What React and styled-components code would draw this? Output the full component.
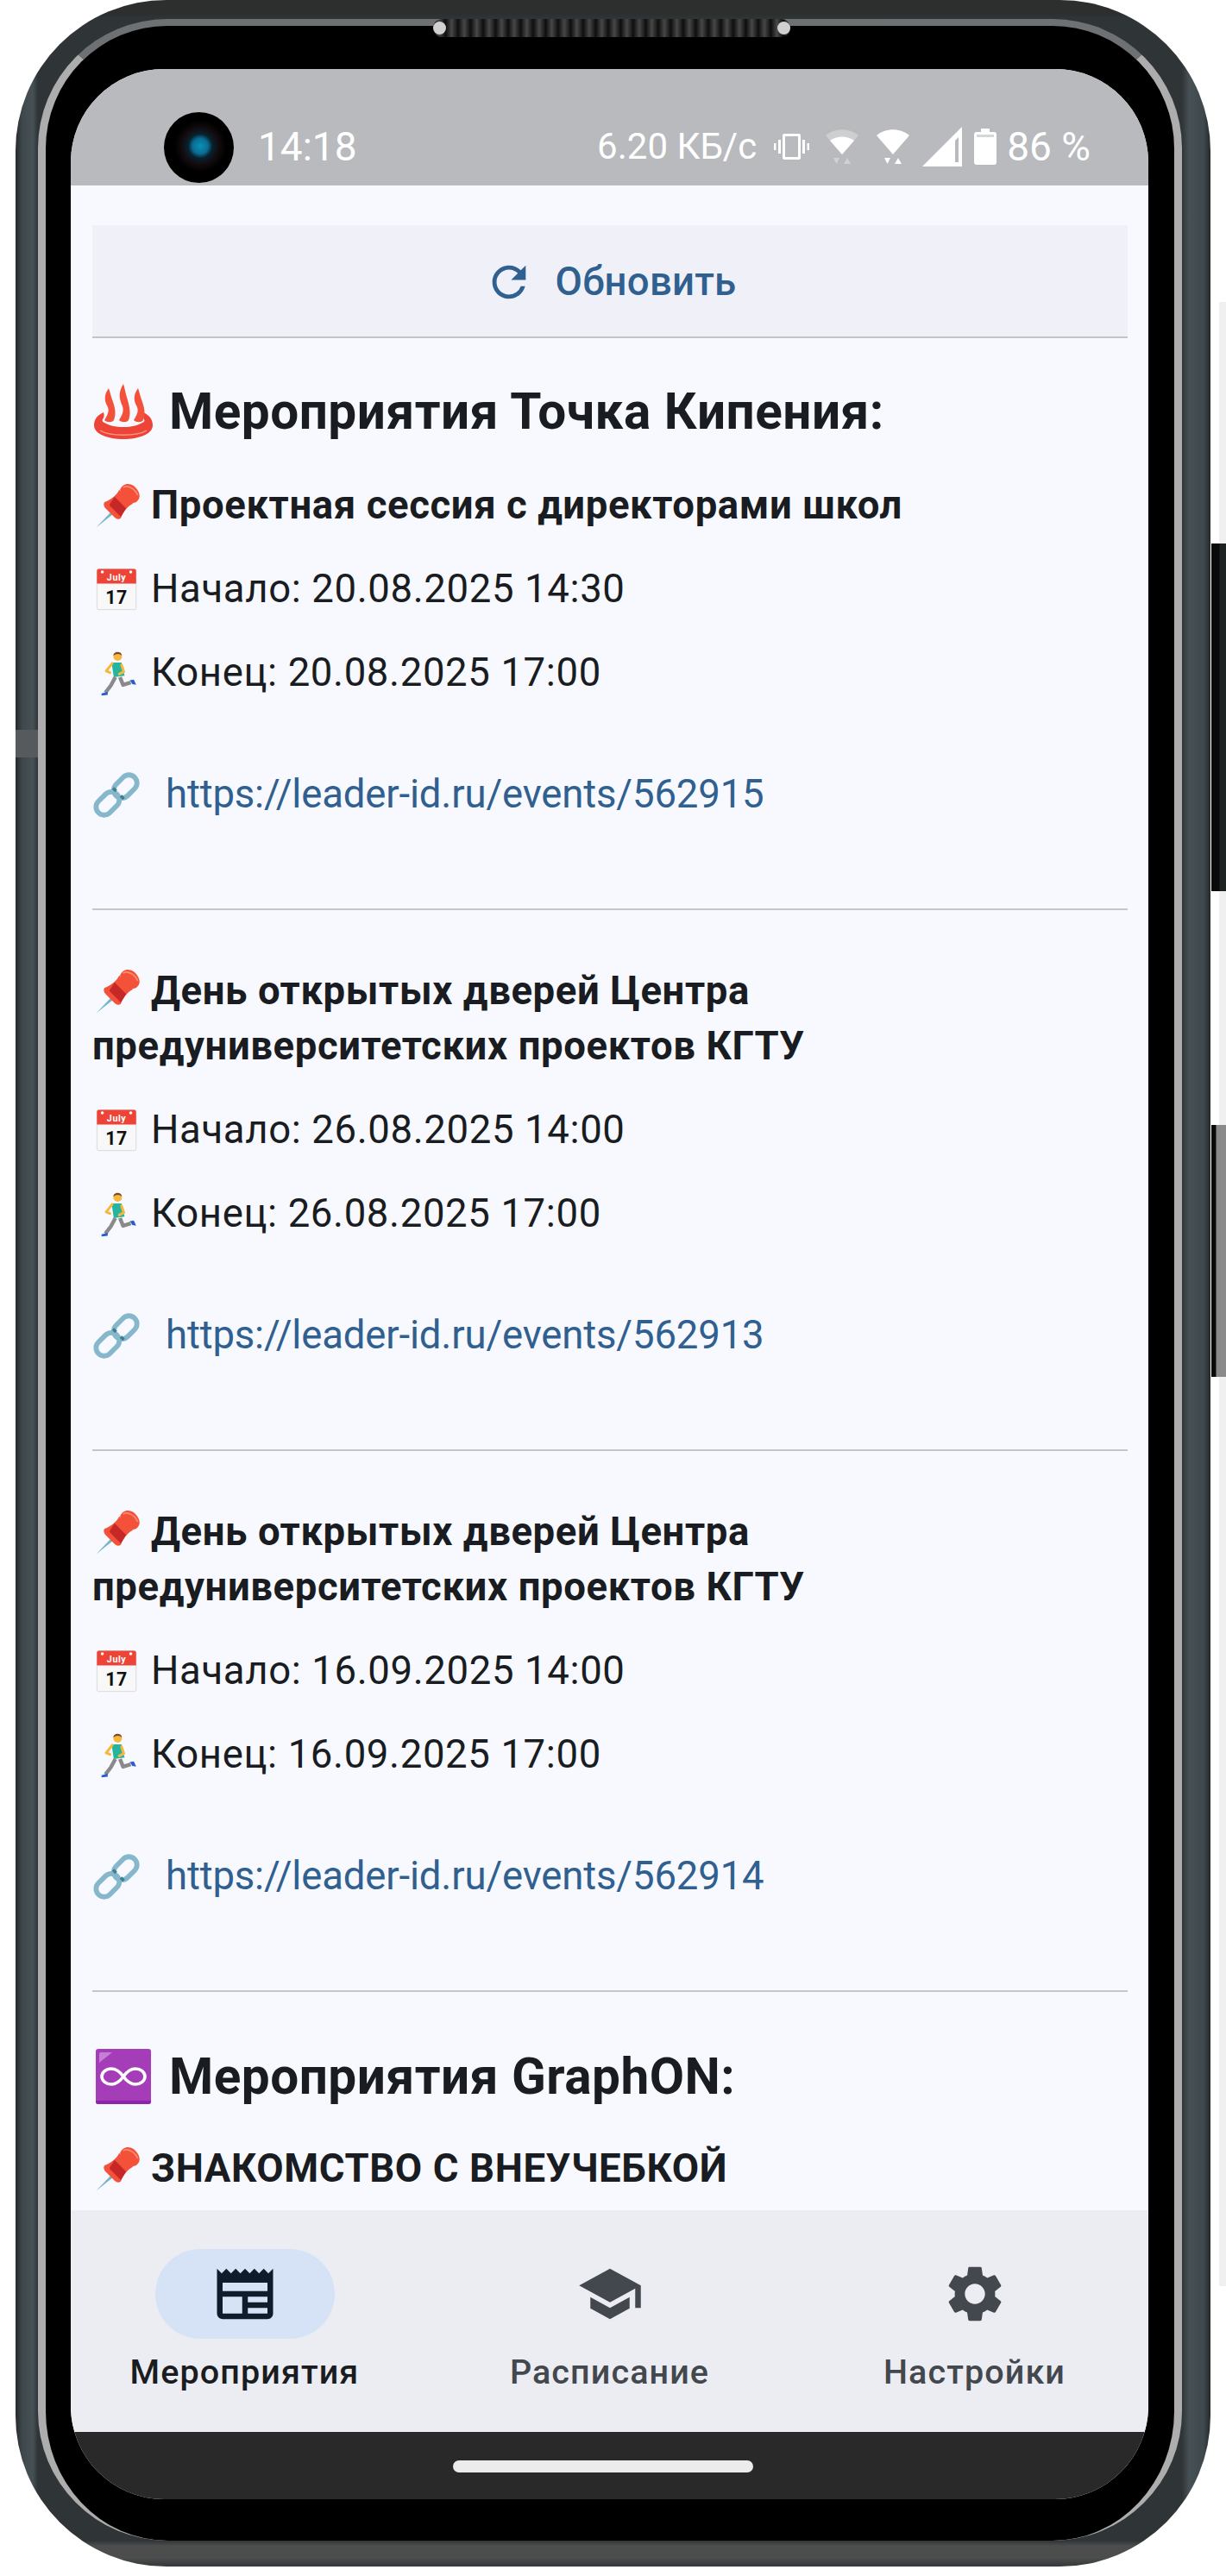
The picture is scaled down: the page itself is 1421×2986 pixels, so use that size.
import React from "react";
import styled, { createGlobalStyle } from "styled-components";
import { MdRefresh, MdNewspaper, MdSchool, MdSettings } from "react-icons/md";

const Global = createGlobalStyle`
  html, body { margin: 0; padding: 0; background: #fff; }
  body { font-family: Roboto, "Noto Sans", sans-serif; }
`;

const Page = styled.div`
  width: 1421px;
  height: 2986px;
  position: relative;
  overflow: hidden;
  background: #fff;
`;

const SideStrip = styled.div`
  position: absolute;
  right: 0;
  top: 350px;
  width: 8px;
  height: 2300px;
  background: #f0f0f0;
`;

const SideKey = styled.div`
  position: absolute;
  right: 0;
  width: 17px;
  top: ${(p) => p.$top}px;
  height: ${(p) => p.$height}px;
  background: linear-gradient(90deg, #0a0a0a 0 ${(p) => p.$edge}px, ${(p) => p.$color} ${(p) => p.$edge + 1}px);
`;

const RimMark = styled.div`
  position: absolute;
  width: 26px;
  left: ${(p) => p.$left}px;
  top: ${(p) => p.$top}px;
  height: ${(p) => p.$height}px;
  background: ${(p) => p.$color};
`;

const Shell = styled.div`
  position: relative;
  width: 1385px;
  height: 2975px;
  margin-left: 18px;
  box-sizing: border-box;
  padding: 22px 33px 30px 26px;
  border-radius: 175px;
  background:
    linear-gradient(180deg, #2d2f2f 0, #2d2f2f 16px, rgba(45, 47, 47, 0) 22px),
    linear-gradient(0deg, #33383a 0, #4c4d4d 10px, #4c4d4d 24px, rgba(76, 77, 77, 0) 30px),
    linear-gradient(90deg, #25292a 0, #3f494d 8px, #465055 20px, #2f3537 26px, #2f3537 1352px, #465055 1360px, #3f494d 1377px, #25292a 1385px);
`;

const Rim = styled.div`
  height: 100%;
  box-sizing: border-box;
  border-style: solid;
  border-color: #6e7173 #adadad transparent #adadad;
  border-width: 8px 9px 0 9px;
  border-radius: 150px;
  background: #000;
  padding: 50px 30px 48px 29px;
`;

const Screen = styled.div`
  height: 100%;
  border-radius: 108px;
  overflow: hidden;
  display: flex;
  flex-direction: column;
  background: #f8f9ff;
`;

const Speaker = styled.div`
  position: absolute;
  left: 484px;
  top: 22px;
  width: 414px;
  height: 21px;
  border-radius: 10px;
  background: repeating-linear-gradient(90deg, #0e0e0e 0, #474747 7px, #0e0e0e 14.5px);
  &::before, &::after {
    content: "";
    position: absolute;
    top: 3px;
    width: 15px;
    height: 15px;
    border-radius: 50%;
    background: #d0d0d0;
  }
  &::before { left: 0; }
  &::after { right: 0; }
`;

const StatusBar = styled.div`
  flex: 0 0 135px;
  position: relative;
  display: flex;
  align-items: center;
  background: #b9babd;
  color: #fff;
  font-size: 42px;
  padding: 44px 67px 0 217px;
  box-sizing: border-box;
`;

const Camera = styled.div`
  position: absolute;
  left: 108px;
  top: 50px;
  width: 81px;
  height: 82px;
  border-radius: 50%;
  background: radial-gradient(circle at 52% 48%, #0c8fb8 0, #0a6c92 9px, #08222e 14px, #120a0d 22px, #000 30px);
`;

const Clock = styled.span`
  flex: 1;
  font-size: 46px;
`;

const StatusRight = styled.div`
  display: flex;
  align-items: center;
`;

const StatusText = styled.span`
  margin-right: ${(p) => p.$mr || 0}px;
  font-size: ${(p) => p.$size || 42}px;
  white-space: nowrap;
`;

const StatusIcon = styled.svg`
  display: block;
  width: ${(p) => p.$w}px;
  height: ${(p) => p.$h}px;
  margin-right: ${(p) => p.$mr || 0}px;
  fill: #fff;
`;

const Content = styled.div`
  flex: 1;
  min-height: 0;
  overflow: hidden;
  box-sizing: border-box;
  padding: 46px 24px 0 25px;
`;

const RefreshButton = styled.div`
  height: 131px;
  box-sizing: border-box;
  display: flex;
  align-items: center;
  justify-content: center;
  padding-top: 2px;
  background: #f0f1f8;
  border-bottom: 2px solid #c3c4c9;
  color: #30608f;
  font-size: 45.5px;
  font-weight: 500;
  letter-spacing: 0.25px;
  svg { width: 58px; height: 58px; margin-right: 25px; }
`;

const Heading = styled.h2`
  margin: ${(p) => p.$mt}px 0 0;
  font-size: 58.5px;
  line-height: 76px;
  font-weight: 700;
  letter-spacing: 0.5px;
  color: #191c20;
  white-space: nowrap;
  display: flex;
  align-items: center;
`;

const Title = styled.p`
  margin: ${(p) => p.$mt}px 0 0;
  font-size: 45.5px;
  line-height: 64px;
  font-weight: 700;
  color: #191c20;
  letter-spacing: 0.6px;
`;

const Line = styled.p`
  margin: ${(p) => p.$mt}px 0 0;
  font-size: 45.5px;
  line-height: 65px;
  color: #191c20;
  letter-spacing: 0.63px;
`;

const LinkRow = styled(Line)`
  margin-top: 76px;
`;

const Url = styled.span`
  color: #30608f;
  margin-left: 17px;
  letter-spacing: -0.15px;
`;

const Rule = styled.hr`
  margin: 100px 0 0;
  border: 0;
  height: 2px;
  background: #c4c6cc;
`;

const EmojiBox = styled.svg`
  width: ${(p) => p.$size || 57}px;
  height: ${(p) => p.$size || 57}px;
  margin-right: ${(p) => p.$mr ?? 11}px;
  vertical-align: -14px;
  flex: none;
`;

const Pin = () => (
  <EmojiBox viewBox="0 0 64 64">
    <path d="M5 60 L26 38 L29 41 Z" fill="#79b4c8" />
    <path d="M16 27 C24 24 32 18 35 11 L53 29 C46 32 40 40 37 48 C34 50 31 49 29 47 L18 36 C15 33 14 29 16 27 Z" fill="#f4513a" />
    <path d="M29 20 L44 35 L37 46 L22 31 Z" fill="#c62828" />
    <path d="M36 11 C39 3 47 1 54 6 C61 12 64 20 59 25 C56 29 50 29 47 25 L38 16 Z" fill="#f4513a" />
    <path d="M40 8 C46 4 56 10 59 18" fill="none" stroke="#ff8a70" strokeWidth="2" />
  </EmojiBox>
);

const Calendar = () => (
  <EmojiBox viewBox="0 0 64 64">
    <rect x="6" y="5" width="51" height="53" rx="2.5" fill="#f8f8f8" stroke="#d6d6d6" strokeWidth="1" />
    <path d="M6 24 V7.5 A2.5 2.5 0 0 1 8.5 5 H54.5 A2.5 2.5 0 0 1 57 7.5 V24 Z" fill="#ee4438" />
    <circle cx="13" cy="9" r="2" fill="#fff" />
    <circle cx="50" cy="9" r="2" fill="#fff" />
    <text x="31.5" y="20" textAnchor="middle" fontFamily="Roboto" fontWeight="700" fontSize="12" fill="#fff">July</text>
    <text x="31.5" y="50" textAnchor="middle" fontFamily="Roboto" fontWeight="700" fontSize="24" fill="#111">17</text>
  </EmojiBox>
);

const Runner = () => (
  <EmojiBox viewBox="0 0 64 64">
    <circle cx="33" cy="10" r="5.6" fill="#f6b73c" />
    <path d="M27.5 9 C27 3 38 2 38.6 9 C35 6 31 6 27.5 9 Z" fill="#7a4a2a" />
    <path d="M25 18 H38 L42 35 L28 37 Z" fill="#25b4a0" />
    <path d="M26 19 L18 29 L23 31" fill="none" stroke="#f6b73c" strokeWidth="3.4" strokeLinecap="round" strokeLinejoin="round" />
    <path d="M38 21 L41 30 L35 33" fill="none" stroke="#f6b73c" strokeWidth="3.4" strokeLinecap="round" strokeLinejoin="round" />
    <path d="M30 37 L24 48 L17 57" fill="none" stroke="#8a8a8a" strokeWidth="5" strokeLinejoin="round" />
    <path d="M36 37 L40 47 L50 44" fill="none" stroke="#8a8a8a" strokeWidth="5" strokeLinejoin="round" />
    <path d="M12 58 L20 56 L20 60 L12 61 Z" fill="#2a5bd0" />
    <path d="M49 41 L54 40 L57 47 L52 46 Z" fill="#2a5bd0" />
  </EmojiBox>
);

const Chain = () => (
  <EmojiBox viewBox="0 0 64 64">
    <g fill="none" strokeWidth="6.5" stroke="#86b7ca">
      <rect x="-17" y="-10.5" width="34" height="21" rx="10.5" transform="translate(20 43) rotate(-45)" />
      <rect x="-17" y="-10.5" width="34" height="21" rx="10.5" transform="translate(43 21) rotate(-45)" />
    </g>
    <path d="M27 23 L31 27 M37 33 L41 37" stroke="#3d7f8f" strokeWidth="4" />
  </EmojiBox>
);

const Springs = () => (
  <EmojiBox viewBox="0 0 72 72" $size={72} $mr={17}>
    <path d="M13 37 C6 40 2 45 2 52 C2 62 18 68 36 68 C54 68 70 62 70 52 C70 45 66 40 59 37 C58 40 58 42 60 45 C61 47 60 48 58 49 C53 52 45 54 36 54 C27 54 19 52 14 49 C12 48 11 47 12 45 C14 42 14 40 13 37 Z" fill="#ee4438" />
    <path d="M9 58 C20 65 52 65 63 58" fill="none" stroke="#ff9a88" strokeWidth="1.4" />
    <g fill="#f4513a">
      <path d="M19 9 C12 19 15 25 18 31 C20 36 17 41 14 46 C17 49 23 49 25 46 C28 38 26 31 24 25 C22 20 21 15 19 9 Z" />
      <path d="M36 4 C29 15 32 23 35 30 C37 36 34 41 31 46 C34 49 40 49 42 46 C45 38 43 30 41 23 C39 17 38 11 36 4 Z" />
      <path d="M53 9 C46 19 49 25 52 31 C54 36 51 41 48 46 C51 49 57 49 59 46 C62 38 60 31 58 25 C56 20 55 15 53 9 Z" />
    </g>
  </EmojiBox>
);

const InfinityBox = () => (
  <EmojiBox viewBox="0 0 72 72" $size={72} $mr={17}>
    <rect x="4" y="4" width="64" height="64" rx="3" fill="#a63db8" />
    <path d="M4 65 V64 H68 V65 A3 3 0 0 1 65 68 H7 A3 3 0 0 1 4 65 Z" fill="#8e24aa" />
    <path d="M8 20 V10 A2 2 0 0 1 10 8 H23 Z" fill="#c77fd6" />
    <path d="M36 36 C31 29 27 27 22 27 C16 27 11 31 11 36 C11 41 16 45 22 45 C27 45 31 43 36 36 C41 29 45 27 50 27 C56 27 61 31 61 36 C61 41 56 45 50 45 C45 45 41 43 36 36 Z" fill="none" stroke="#fff" strokeWidth="3.6" />
  </EmojiBox>
);

const Wifi = ({ dim, mr }) => (
  <StatusIcon viewBox="0 0 38 40" $w={38} $h={40} $mr={mr}>
    <path d="M0 7 C10 -2 28 -2 38 7 L19 29 Z" opacity={dim ? 0.3 : 1} />
    {dim && <path d="M5 13 C13 7 25 7 33 13 L19 29 Z" />}
    <path d="M9 33 H16 L12.5 40 Z" opacity={dim ? 0.35 : 1} />
    <path d="M25 33 L29 40 H21 Z" opacity={dim ? 0.35 : 1} />
  </StatusIcon>
);

const Tabs = styled.nav`
  flex: 0 0 257px;
  display: grid;
  grid-template-columns: repeat(3, 400px);
  column-gap: 23px;
  justify-content: center;
  background: #ecedf2;
`;

const Tab = styled.div`
  display: flex;
  flex-direction: column;
  align-items: center;
  padding-top: 45px;
  color: ${(p) => (p.$active ? "#191c20" : "#43474e")};
  font-size: 39.5px;
  font-weight: 500;
  letter-spacing: 1.1px;
`;

const IconPill = styled.div`
  width: 208px;
  height: 104px;
  border-radius: 52px;
  display: flex;
  align-items: center;
  justify-content: center;
  background: ${(p) => (p.$active ? "#d6e3f7" : "transparent")};
  svg { width: 78px; height: 78px; color: ${(p) => (p.$active ? "#0f1c2c" : "#43474e")}; }
`;

const TabLabel = styled.span`
  margin-top: 13px;
  line-height: 52px;
`;

const Gesture = styled.div`
  flex: 0 0 78px;
  background: #292929;
  display: flex;
  justify-content: center;
  padding: 33px 15px 0 0;
  box-sizing: border-box;
`;

const Handle = styled.div`
  width: 348px;
  height: 14px;
  border-radius: 7px;
  background: #ececec;
`;

const Event = ({ first, title, start, end, url }) => (
  <>
    <Title $mt={first ? 39 : 62}><Pin />{title}</Title>
    <Line $mt={32}><Calendar />Начало: {start}</Line>
    <Line $mt={32}><Runner />Конец: {end}</Line>
    <LinkRow><Chain /><Url>{url}</Url></LinkRow>
    <Rule />
  </>
);

export default function App() {
  return (
    <Page>
      <Global />
      <SideStrip />
      <SideKey $top={630} $height={403} $color="#1d2222" $edge={9} />
      <SideKey $top={1304} $height={292} $color="#8a8a8a" $edge={5} />
      <Shell>
        <Speaker />
        <Rim>
          <Screen>
            <StatusBar>
              <Camera />
              <Clock>14:18</Clock>
              <StatusRight>
                <StatusText $mr={20}>6.20 КБ/с</StatusText>
                <StatusIcon viewBox="0 0 41 30" $w={41} $h={30} $mr={19}>
                  <path fillRule="evenodd" d="M12 0 H29 A2 2 0 0 1 31 2 V28 A2 2 0 0 1 29 30 H12 A2 2 0 0 1 10 28 V2 A2 2 0 0 1 12 0 Z M13 3 V27 H28 V3 Z" />
                  <path d="M5 7 H8 V23 H5 Z M0 11 H2.5 V19 H0 Z M33 7 H36 V23 H33 Z M38.5 11 H41 V19 H38.5 Z" />
                </StatusIcon>
                <Wifi dim mr={21} />
                <Wifi mr={15} />
                <StatusIcon viewBox="0 0 46 46" $w={46} $h={46} $mr={14}>
                  <path fillRule="evenodd" d="M46 0 V46 H0 Z M42 12 V41 H38 V16 Z" />
                </StatusIcon>
                <StatusIcon viewBox="0 0 26 42" $w={26} $h={42} $mr={12}>
                  <path d="M8 0 H18 V4 H23 A3 3 0 0 1 26 7 V39 A3 3 0 0 1 23 42 H3 A3 3 0 0 1 0 39 V7 A3 3 0 0 1 3 4 H8 Z" />
                  <rect x="3" y="7" width="20" height="3" fill="#b9babd" opacity="0.6" />
                </StatusIcon>
                <StatusText $size={46}>86 %</StatusText>
              </StatusRight>
            </StatusBar>
            <Content>
              <RefreshButton><MdRefresh />Обновить</RefreshButton>
              <Heading $mt={47}><Springs />Мероприятия Точка Кипения:</Heading>
              <Event first title="Проектная сессия с директорами школ" start="20.08.2025 14:30" end="20.08.2025 17:00" url="https://leader-id.ru/events/562915" />
              <Event title="День открытых дверей Центра предуниверситетских проектов КГТУ" start="26.08.2025 14:00" end="26.08.2025 17:00" url="https://leader-id.ru/events/562913" />
              <Event title="День открытых дверей Центра предуниверситетских проектов КГТУ" start="16.09.2025 14:00" end="16.09.2025 17:00" url="https://leader-id.ru/events/562914" />
              <Heading $mt={60}><InfinityBox />Мероприятия GraphON:</Heading>
              <Title $mt={37}><Pin />ЗНАКОМСТВО С ВНЕУЧЕБКОЙ</Title>
            </Content>
            <Tabs>
              <Tab $active><IconPill $active><MdNewspaper /></IconPill><TabLabel>Мероприятия</TabLabel></Tab>
              <Tab><IconPill><MdSchool /></IconPill><TabLabel>Расписание</TabLabel></Tab>
              <Tab><IconPill><MdSettings /></IconPill><TabLabel>Настройки</TabLabel></Tab>
            </Tabs>
            <Gesture><Handle /></Gesture>
          </Screen>
        </Rim>
        <RimMark $left={0} $top={846} $height={32} $color="#565a5c" />
      </Shell>
    </Page>
  );
}
